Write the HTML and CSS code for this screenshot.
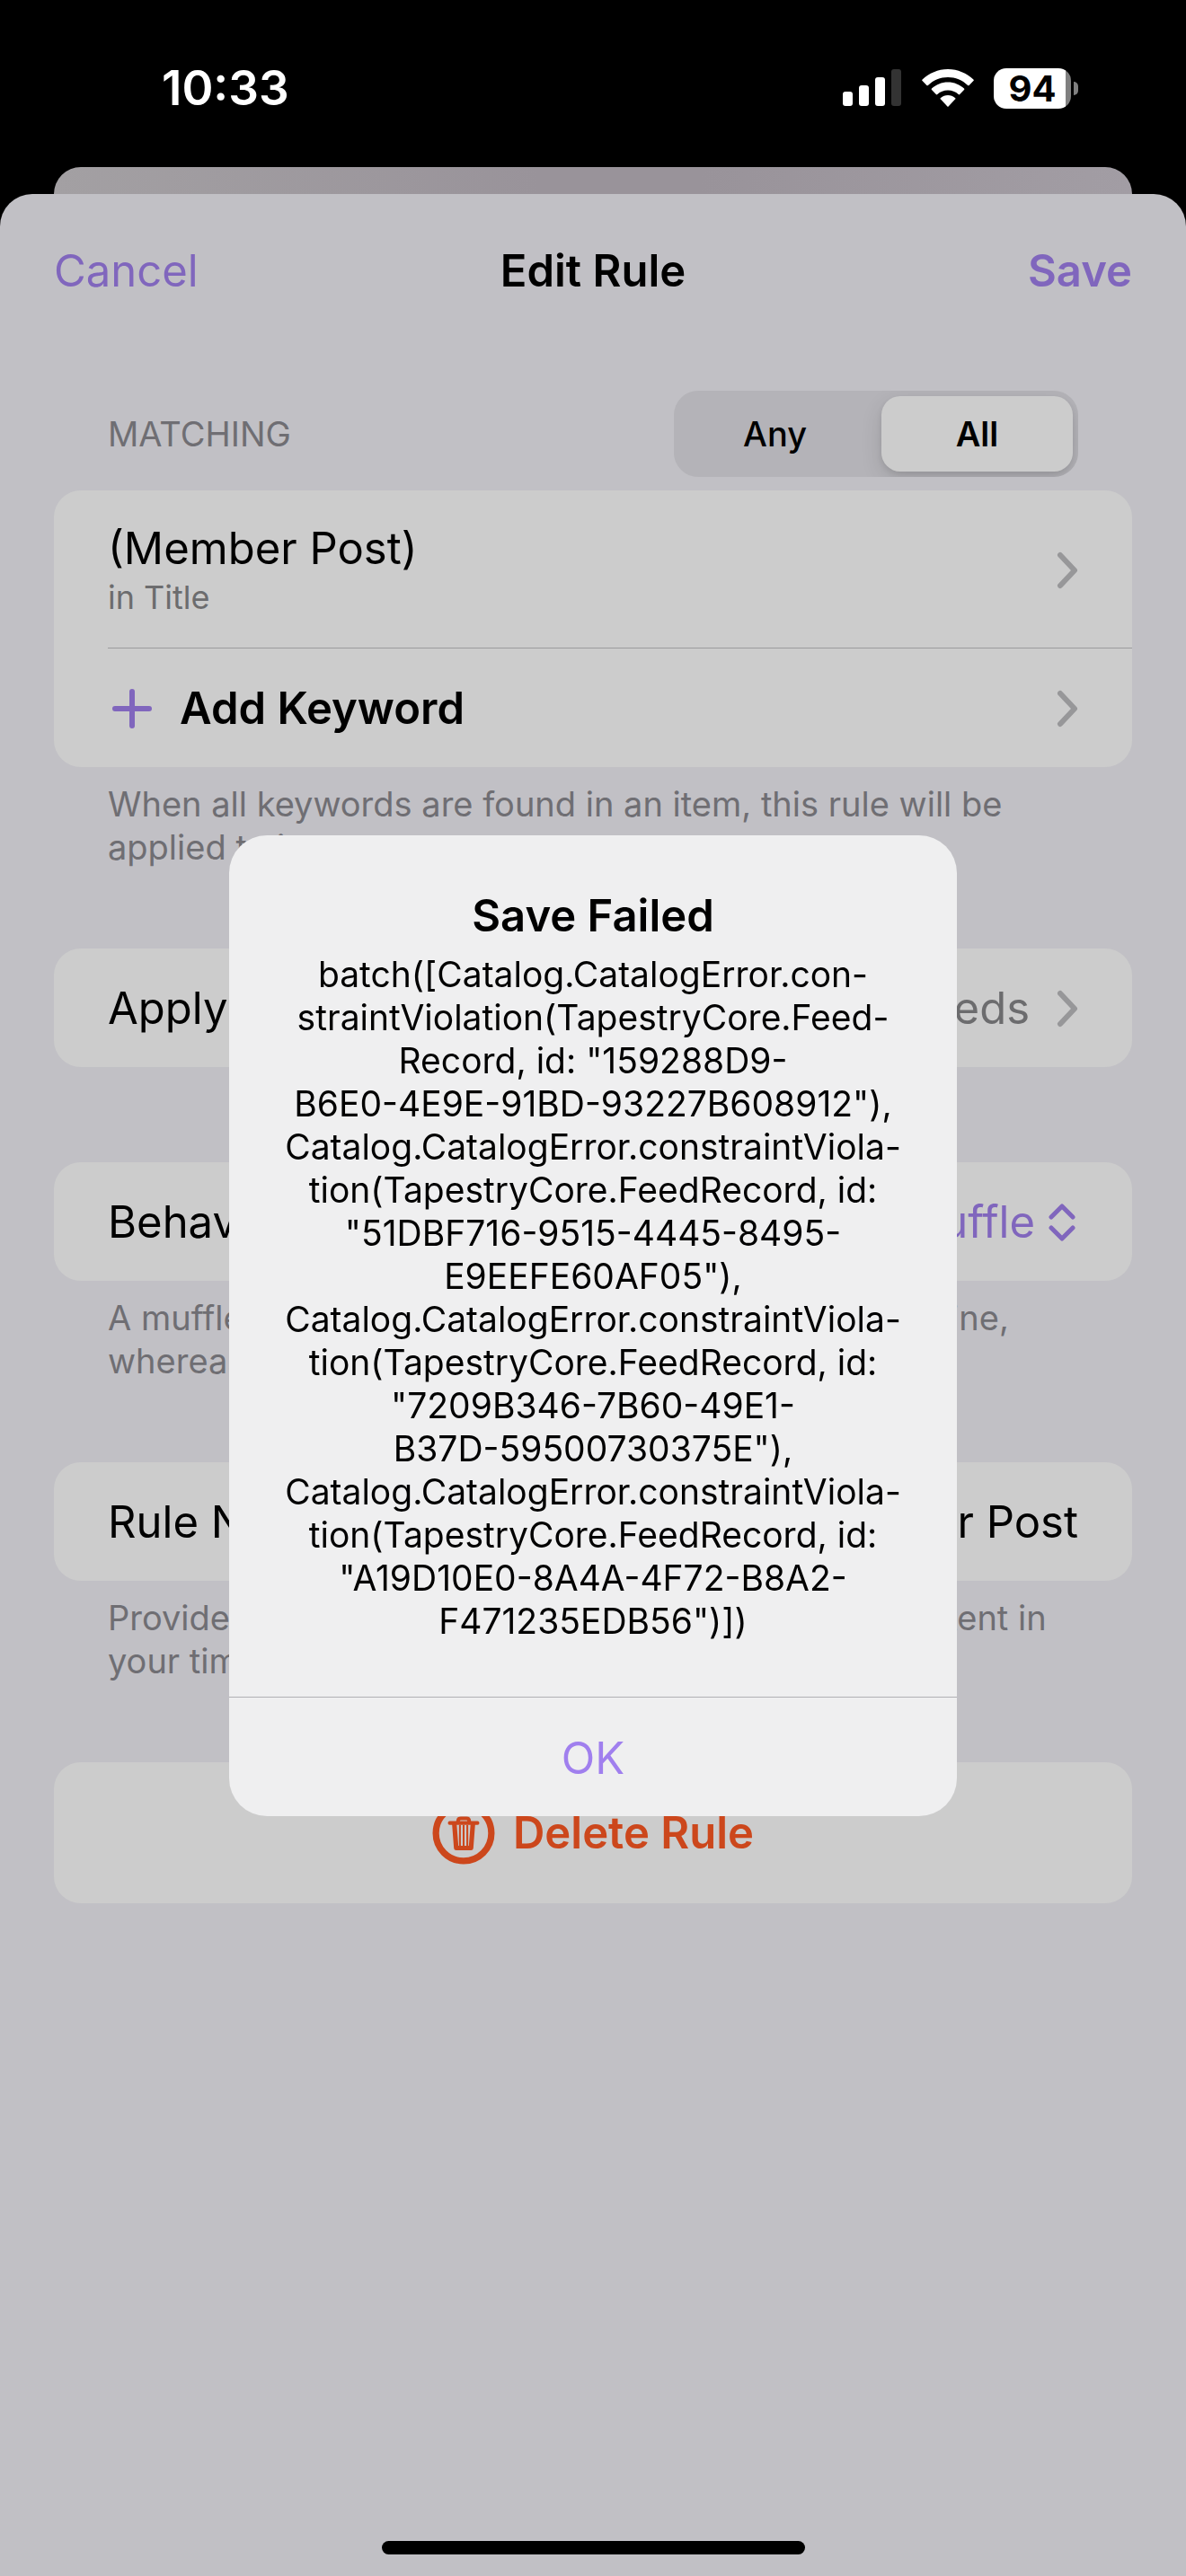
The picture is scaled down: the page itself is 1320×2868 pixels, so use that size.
FILE: index.html
```html
<!DOCTYPE html>
<html lang="en">
<head>
    <meta charset="UTF-8">
    <meta name="viewport" content="width=device-width, initial-scale=1.0">
    <title>Edit Rule</title>
    <link rel="stylesheet" href="styles.css">
</head>
<body>

    <!-- Status bar -->
    <div class="status-bar">
        <span class="time">10:33</span>
        <div class="status-icons">
            <svg class="signal" width="66" height="42" viewBox="0 0 66 42" aria-hidden="true">
                <rect x="0" y="25" width="11" height="16" rx="3" fill="#fff"/>
                <rect x="18" y="18" width="11" height="23" rx="3" fill="#fff"/>
                <rect x="36" y="9" width="11" height="32" rx="3" fill="#fff"/>
                <rect x="54" y="0" width="11" height="41" rx="3" fill="#333"/>
            </svg>
            <svg class="wifi" width="58" height="42" viewBox="0 0 58 42" aria-hidden="true">
                <g fill="#fff">
                    <path d="M29 0C18 0 8 4.500 .6 11.600a1 1 0 0 0 0 1.500l4.800 4.800a1 1 0 0 0 1.500 0C13 12.200 20.600 9 29 9s16 3.200 22.100 8.900a1 1 0 0 0 1.500 0l4.800-4.800a1 1 0 0 0 0-1.500C50 4.500 40 0 29 0z"/>
                    <path d="M29 14.500c-7 0-13.300 2.700-18 7.100a1 1 0 0 0 0 1.500l4.800 4.900a1 1 0 0 0 1.500 0c3.100-2.800 7.200-4.500 11.700-4.500s8.600 1.700 11.700 4.500a1 1 0 0 0 1.500 0l4.800-4.900a1 1 0 0 0 0-1.500c-4.700-4.400-11-7.100-18-7.100z"/>
                    <path d="M29 29c-3 0-5.800 1.100-8 2.900a1 1 0 0 0 0 1.600l7.200 7.700a1 1 0 0 0 1.600 0l7.200-7.700a1 1 0 0 0 0-1.600c-2.200-1.800-5-2.900-8-2.900z"/>
                </g>
            </svg>
            <div class="battery"><span class="battery-level">94</span></div>
        </div>
    </div>

    <div class="sheet-behind"></div>

    <!-- Edit sheet -->
    <main class="sheet">
        <header class="sheet-header">
            <button type="button" class="nav-button">Cancel</button>
            <h1>Edit Rule</h1>
            <button type="button" class="nav-button nav-save">Save</button>
        </header>

        <form class="rule-form">
            <section class="group">
                <div class="group-header">
                    <span id="matching-label">Matching</span>
                    <div class="segmented" role="radiogroup" aria-labelledby="matching-label">
                        <label><input type="radio" name="matching" value="any"><span>Any</span></label>
                        <label><input type="radio" name="matching" value="all" checked><span>All</span></label>
                    </div>
                </div>
                <div class="card">
                    <a href="#keyword" class="row row-tall">
                        <span class="row-text">
                            <span>(Member Post)</span>
                            <small>in Title</small>
                        </span>
                        <svg class="chevron" width="24" height="42" viewBox="0 0 24 42"><path d="M4 4l16 17L4 38"/></svg>
                    </a>
                    <a href="#add" class="row row-add">
                        <svg class="plus" width="54" height="54" viewBox="0 0 54 54"><path d="M27 8v38M8 27h38"/></svg>
                        <span class="add-text">Add Keyword</span>
                        <svg class="chevron" width="24" height="42" viewBox="0 0 24 42"><path d="M4 4l16 17L4 38"/></svg>
                    </a>
                </div>
                <p class="note">When all keywords are found in an item, this rule will be<br>applied to it.</p>
            </section>

            <section class="group">
                <div class="card">
                    <a href="#feeds" class="row">
                        <span>Apply To</span>
                        <span class="row-value">All Feeds</span>
                        <svg class="chevron" width="24" height="42" viewBox="0 0 24 42"><path d="M4 4l16 17L4 38"/></svg>
                    </a>
                </div>
            </section>

            <section class="group">
                <div class="card">
                    <div class="row">
                        <label for="behavior">Behavior</label>
                        <select id="behavior" name="behavior">
                            <option>Muffle</option>
                            <option>Mute</option>
                        </select>
                        <svg class="updown" width="36" height="42" viewBox="0 0 36 42"><path d="M6 15L18 3l12 12M6 27l12 12 12-12"/></svg>
                    </div>
                </div>
                <p class="note">A muffled item is shown more compactly in the timeline,<br>whereas a muted item is hidden.</p>
            </section>

            <section class="group">
                <div class="card">
                    <div class="row">
                        <label for="rule-name">Rule Name</label>
                        <input type="text" id="rule-name" name="name" value="Member Post">
                    </div>
                </div>
                <p class="note">Provide a name to identify this rule with muffled content in<br>your timeline.</p>
            </section>

            <section class="group">
                <div class="card">
                    <button type="button" class="delete-button">
                        <svg width="70" height="70" viewBox="0 0 68 68" fill="none" stroke="currentColor">
                            <circle cx="34" cy="34" r="30" stroke-width="7"/>
                            <path d="M28 23v-2q0-3 3-3h6q3 0 3 3v2" stroke-width="4"/>
                            <path d="M19 23h30" stroke-width="4" stroke-linecap="round"/>
                            <path d="M24 24l2 26h16l2-26" stroke-width="5" stroke-linejoin="round"/>
                            <path d="M30 25v25M34 25v25M38 25v25" stroke-width="2"/>
                        </svg>
                        <span>Delete Rule</span>
                    </button>
                </div>
            </section>
        </form>
    </main>

    <div class="home-indicator"></div>

    <!-- Error alert -->
    <div class="overlay">
        <div class="alert" role="alertdialog" aria-labelledby="alert-title" aria-describedby="alert-message">
            <div class="alert-body">
                <h2 id="alert-title">Save Failed</h2>
                <p id="alert-message">batch([Catalog.CatalogError.con-<br>
                straintViolation(TapestryCore.Feed-<br>
                Record, id: "159288D9-<br>
                B6E0-4E9E-91BD-93227B608912"),<br>
                Catalog.CatalogError.constraintViola-<br>
                tion(TapestryCore.FeedRecord, id:<br>
                "51DBF716-9515-4445-8495-<br>
                E9EEFE60AF05"),<br>
                Catalog.CatalogError.constraintViola-<br>
                tion(TapestryCore.FeedRecord, id:<br>
                "7209B346-7B60-49E1-<br>
                B37D-59500730375E"),<br>
                Catalog.CatalogError.constraintViola-<br>
                tion(TapestryCore.FeedRecord, id:<br>
                "A19D10E0-8A4A-4F72-B8A2-<br>
                F471235EDB56")])</p>
            </div>
            <button type="button" class="alert-button">OK</button>
        </div>
    </div>

</body>
</html>
```
FILE: styles.css
```css
* {
    margin: 0;
    padding: 0;
    box-sizing: border-box;
}

body {
    font-family: Inter, 'Liberation Sans', sans-serif;
    font-size: 49px;
    line-height: 60px;
    background: #000;
    color: #000;
    min-height: 100vh;
    display: flex;
    flex-direction: column;
}

button, input, select {
    font: inherit;
    color: inherit;
    background: none;
    border: none;
    appearance: none;
}

button {
    cursor: pointer;
}

a {
    color: inherit;
    text-decoration: none;
}

/* Status bar */
.status-bar {
    height: 186px;
    padding: 10px 120px 0 180px;
    display: flex;
    justify-content: space-between;
    align-items: center;
    color: #fff;
}

.time {
    font-size: 53px;
    font-weight: 600;
}

.status-icons {
    display: flex;
    align-items: center;
    gap: 22px;
}

.battery {
    position: relative;
    width: 86px;
    height: 45px;
    margin-right: 8px;
    border-radius: 14px;
    background: linear-gradient(to right, #fff 80px, #808080 80px);
    color: #000;
    text-align: center;
}

.battery::after {
    content: "";
    position: absolute;
    right: -8px;
    top: 15px;
    width: 5px;
    height: 15px;
    border-radius: 0 8px 8px 0;
    background: #808080;
}

.battery-level {
    display: block;
    font-size: 40px;
    font-weight: 700;
    line-height: 45px;
}

/* Sheets */
.sheet-behind {
    height: 60px;
    margin: 0 60px -30px;
    border-radius: 30px 30px 0 0;
    background: linear-gradient(to right, #a3a0a3, #99939a 45%, #99939a 60%, #a29da4);
}

.sheet {
    position: relative;
    flex: 1;
    background: #c1c0c5;
    border-radius: 36px 36px 0 0;
}

.sheet-header {
    display: grid;
    grid-template-columns: 1fr auto 1fr;
    align-items: center;
    height: 171px;
    padding: 0 60px;
}

.sheet-header h1 {
    font-size: 49px;
    font-weight: 600;
}

.nav-button {
    color: #8066bd;
    text-align: left;
}

.nav-save {
    font-weight: 600;
    text-align: right;
}

/* Form groups */
.rule-form {
    padding: 48px 60px 150px;
}

.group-header {
    display: flex;
    justify-content: space-between;
    align-items: center;
    padding: 0 60px;
    margin-bottom: 15px;
    font-size: 38px;
    line-height: 48px;
    color: #6f6e73;
    text-transform: uppercase;
}

.segmented {
    display: grid;
    grid-template-columns: 1fr 1fr;
    gap: 12px;
    width: 450px;
    height: 96px;
    padding: 6px;
    border-radius: 27px;
    background: #b4b3b8;
    overflow: hidden;
    color: #000;
    text-transform: none;
}

.segmented label {
    display: grid;
    cursor: pointer;
}

.segmented input {
    grid-area: 1 / 1;
}

.segmented span {
    grid-area: 1 / 1;
    display: flex;
    align-items: center;
    justify-content: center;
    border-radius: 21px;
    font-weight: 500;
}

.segmented input:checked + span {
    background: #ccc;
    font-weight: 600;
    box-shadow: 0 9px 24px rgba(0, 0, 0, 0.12), 0 3px 6px rgba(0, 0, 0, 0.08);
}

.card {
    border-radius: 30px;
    background: #ccc;
}

.row {
    display: flex;
    align-items: center;
    min-height: 132px;
    padding: 2px 60px 0;
}

.row-tall {
    min-height: 176px;
    padding-left: 0;
    margin-left: 60px;
    border-bottom: 1px solid #9b9b9e;
}

.row-text {
    display: grid;
    flex: 1;
}

.row-text small {
    font-size: 36px;
    line-height: 48px;
    color: #6c6c6e;
}

.add-text {
    flex: 1;
    padding-left: 26px;
    font-weight: 600;
}

.row-value {
    flex: 1;
    padding-right: 30px;
    color: #6c6c6e;
    text-align: right;
}

.chevron, .plus, .updown {
    fill: none;
    stroke: #979799;
    stroke-width: 6;
    stroke-linecap: round;
    stroke-linejoin: round;
}

.plus, .updown {
    stroke: #8066bd;
}

.updown {
    stroke-width: 5;
}

.row select {
    flex: 1;
    padding-right: 12px;
    color: #8066bd;
    text-align: right;
    text-align-last: right;
}

.row input {
    flex: 1;
    min-width: 0;
    text-align: right;
}

.note {
    padding: 17px 60px 0;
    font-size: 38px;
    line-height: 48px;
    color: #6f6e73;
}

.group + .group {
    margin-top: 89px;
}

.group:nth-child(3) {
    margin-top: 106px;
}

.delete-button {
    display: flex;
    align-items: center;
    justify-content: center;
    gap: 20px;
    width: 100%;
    height: 157px;
    color: #cc471c;
    font-weight: 600;
}

.home-indicator {
    position: fixed;
    left: 50%;
    bottom: 24px;
    width: 471px;
    height: 15px;
    margin-left: -235px;
    border-radius: 8px;
    background: #000;
}

/* Alert */
.overlay {
    position: fixed;
    inset: 0;
    display: flex;
    align-items: center;
    justify-content: center;
    padding: 186px 0 102px;
}

.alert {
    width: 810px;
    border-radius: 42px;
    background: #efeff0;
    text-align: center;
    overflow: hidden;
}

.alert-body {
    padding: 60px 48px;
}

.alert h2 {
    margin-bottom: 11px;
    font-size: 49px;
    font-weight: 600;
}

.alert p {
    font-size: 39px;
    line-height: 48px;
}

.alert-button {
    width: 100%;
    height: 133px;
    padding-top: 3px;
    border-top: 1px solid #b0b0b4;
    color: #a07fee;
}
```
